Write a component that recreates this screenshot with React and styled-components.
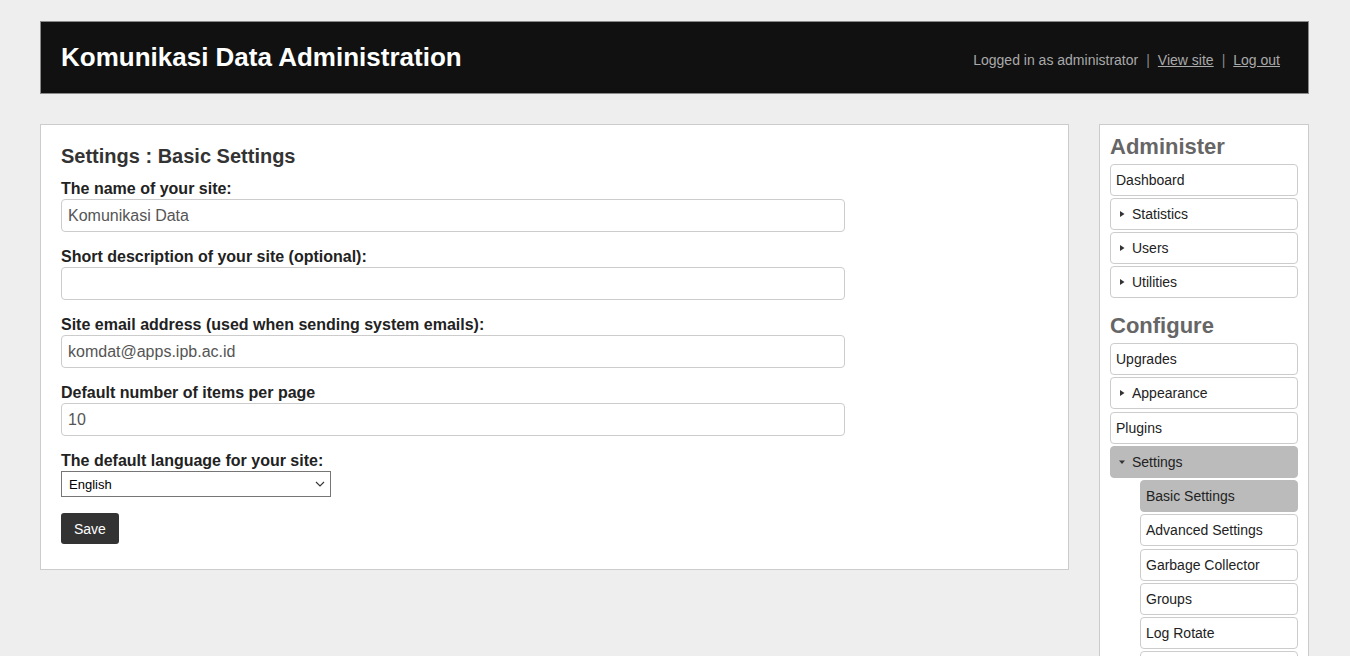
import styled, { createGlobalStyle } from 'styled-components';

const GlobalStyle = createGlobalStyle`
  html, body {
    margin: 0;
    padding: 0;
    background: #eeeeee;
    font-family: "Liberation Sans", Arial, sans-serif;
  }
`;

const Page = styled.div`
  padding: 21px 41px 0 40px;
`;

const Header = styled.header`
  display: flex;
  align-items: center;
  justify-content: space-between;
  height: 71px;
  padding: 0 28px 0 20px;
  background: #111111;
  border: 1px solid #8a8a8a;
`;

const SiteTitle = styled.h1`
  margin: 0;
  font-size: 26px;
  font-weight: 700;
  color: #ffffff;
`;

const UserLinks = styled.div`
  display: flex;
  gap: 8px;
  font-size: 14px;
  color: #aaaaaa;
  padding-top: 5px;
`;

const Sep = styled.span`
  color: #888888;
`;

const HeaderLink = styled.a`
  color: #aaaaaa;
  text-decoration: underline;
  cursor: pointer;
`;

const Columns = styled.div`
  display: flex;
  align-items: flex-start;
  gap: 30px;
  margin-top: 30px;
`;

const Panel = styled.main`
  flex: 1;
  background: #ffffff;
  border: 1px solid #cccccc;
  padding: 19px 20px 25px;
`;

const PanelTitle = styled.h2`
  margin: 0 0 12px;
  font-size: 20px;
  line-height: 24px;
  font-weight: 700;
  color: #333333;
`;

const Field = styled.div`
  margin-bottom: 16px;
`;

const Label = styled.label`
  display: block;
  margin-bottom: 1px;
  font-size: 16px;
  line-height: 18px;
  font-weight: 700;
  color: #222222;
`;

const TextInput = styled.input`
  display: block;
  box-sizing: border-box;
  width: 784px;
  height: 33px;
  padding: 6px;
  border: 1px solid #cccccc;
  border-radius: 4px;
  font-family: inherit;
  font-size: 16px;
  color: #555555;
  background: #ffffff;
  outline: none;
`;

const SelectWrap = styled.div`
  position: relative;
  width: 270px;
`;

const Select = styled.select`
  display: block;
  box-sizing: border-box;
  width: 270px;
  height: 26px;
  padding: 0 7px;
  border: 1px solid #767676;
  border-radius: 0;
  appearance: none;
  background: #ffffff;
  font-family: inherit;
  font-size: 13px;
  color: #000000;
`;

const Chevron = styled.svg`
  position: absolute;
  right: 6px;
  top: 10px;
  pointer-events: none;
`;

const SaveButton = styled.button`
  height: 31px;
  padding: 0 13px;
  border: none;
  border-radius: 3px;
  background: #333333;
  color: #ffffff;
  font-family: inherit;
  font-size: 14px;
  cursor: pointer;
`;

const Sidebar = styled.aside`
  width: 210px;
  box-sizing: border-box;
  background: #ffffff;
  border: 1px solid #cccccc;
  padding: 9px 10px 10px;
`;

const NavHeading = styled.h3`
  margin: ${(p) => (p.$first ? '0' : '15px')} 0 4px;
  font-size: 22px;
  line-height: 26px;
  font-weight: 700;
  color: #666666;
`;

const NavList = styled.div`
  display: flex;
  flex-direction: column;
  gap: ${(p) => p.$gap};
`;

const NavItem = styled.a`
  display: flex;
  align-items: center;
  gap: 7px;
  box-sizing: border-box;
  height: 32px;
  margin-left: ${(p) => (p.$sub ? '30px' : '0')};
  padding-left: ${(p) => (p.$arrow ? '8px' : '5px')};
  border: 1px solid ${(p) => (p.$active ? '#bbbbbb' : '#cccccc')};
  border-radius: 4px;
  background: ${(p) => (p.$active ? '#bbbbbb' : '#ffffff')};
  font-size: 14px;
  color: #222222;
  text-decoration: none;
  cursor: pointer;
`;

const Arrow = ({ open }) =>
  open ? (
    <svg width="6" height="6" viewBox="0 0 6 6">
      <path d="M0 1.5 L6 1.5 L3 5 Z" fill="#333" />
    </svg>
  ) : (
    <svg width="6" height="6" viewBox="0 0 6 6">
      <path d="M1 0 L5.5 3 L1 6 Z" fill="#333" />
    </svg>
  );

const administer = [
  { label: 'Dashboard' },
  { label: 'Statistics', arrow: true },
  { label: 'Users', arrow: true },
  { label: 'Utilities', arrow: true },
];

const configure = [
  { label: 'Upgrades' },
  { label: 'Appearance', arrow: true },
  { label: 'Plugins' },
  { label: 'Settings', arrow: true, open: true, active: true },
  { label: 'Basic Settings', sub: true, active: true },
  { label: 'Advanced Settings', sub: true },
  { label: 'Garbage Collector', sub: true },
  { label: 'Groups', sub: true },
  { label: 'Log Rotate', sub: true },
  { label: 'Plugin Settings', sub: true },
];

function NavGroup({ items, gap }) {
  return (
    <NavList $gap={gap}>
      {items.map((it) => (
        <NavItem key={it.label} $arrow={it.arrow} $sub={it.sub} $active={it.active}>
          {it.arrow && <Arrow open={it.open} />}
          {it.label}
        </NavItem>
      ))}
    </NavList>
  );
}

export default function App() {
  return (
    <>
      <GlobalStyle />
      <Page>
        <Header>
          <SiteTitle>Komunikasi Data Administration</SiteTitle>
          <UserLinks>
            <span>Logged in as administrator</span>
            <Sep>|</Sep>
            <HeaderLink>View site</HeaderLink>
            <Sep>|</Sep>
            <HeaderLink>Log out</HeaderLink>
          </UserLinks>
        </Header>

        <Columns>
          <Panel>
            <PanelTitle>Settings : Basic Settings</PanelTitle>
            <Field>
              <Label>The name of your site:</Label>
              <TextInput defaultValue="Komunikasi Data" />
            </Field>
            <Field>
              <Label>Short description of your site (optional):</Label>
              <TextInput defaultValue="" />
            </Field>
            <Field>
              <Label>Site email address (used when sending system emails):</Label>
              <TextInput defaultValue="komdat@apps.ipb.ac.id" />
            </Field>
            <Field>
              <Label>Default number of items per page</Label>
              <TextInput defaultValue="10" />
            </Field>
            <Field>
              <Label>The default language for your site:</Label>
              <SelectWrap>
                <Select defaultValue="en">
                  <option value="en">English</option>
                </Select>
                <Chevron width="10" height="6" viewBox="0 0 10 6">
                  <path d="M1 1 L5 5 L9 1" fill="none" stroke="#333" strokeWidth="1.1" />
                </Chevron>
              </SelectWrap>
            </Field>
            <SaveButton>Save</SaveButton>
          </Panel>

          <Sidebar>
            <NavHeading $first>Administer</NavHeading>
            <NavGroup items={administer} gap="2px" />
            <NavHeading>Configure</NavHeading>
            <NavGroup items={configure} gap="2.25px" />
          </Sidebar>
        </Columns>
      </Page>
    </>
  );
}
